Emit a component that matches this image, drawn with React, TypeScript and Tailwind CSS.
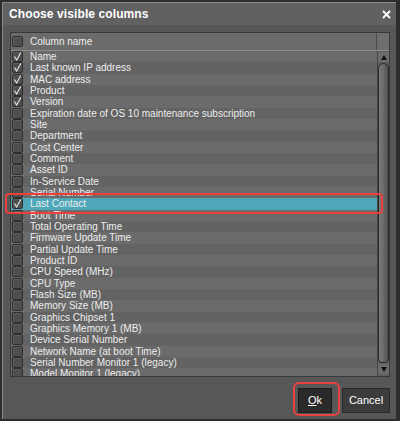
import React from 'react';

type Col = { name: string; checked?: boolean; selected?: boolean };

const columns: Col[] = [
  { name: 'Name', checked: true },
  { name: 'Last known IP address', checked: true },
  { name: 'MAC address', checked: true },
  { name: 'Product', checked: true },
  { name: 'Version', checked: true },
  { name: 'Expiration date of OS 10 maintenance subscription' },
  { name: 'Site' },
  { name: 'Department' },
  { name: 'Cost Center' },
  { name: 'Comment' },
  { name: 'Asset ID' },
  { name: 'In-Service Date' },
  { name: 'Serial Number' },
  { name: 'Last Contact', checked: true, selected: true },
  { name: 'Boot Time' },
  { name: 'Total Operating Time' },
  { name: 'Firmware Update Time' },
  { name: 'Partial Update Time' },
  { name: 'Product ID' },
  { name: 'CPU Speed (MHz)' },
  { name: 'CPU Type' },
  { name: 'Flash Size (MB)' },
  { name: 'Memory Size (MB)' },
  { name: 'Graphics Chipset 1' },
  { name: 'Graphics Memory 1 (MB)' },
  { name: 'Device Serial Number' },
  { name: 'Network Name (at boot Time)' },
  { name: 'Serial Number Monitor 1 (legacy)' },
  { name: 'Model Monitor 1 (legacy)' },
];

function CheckBox({ checked }: { checked?: boolean }) {
  return (
    <div className="w-[11px] h-[11px] shrink-0 rounded-[2px] border border-[#2e2e2e] bg-[#4e4e4e] shadow-[inset_1px_1px_0_#5e5e5e] flex items-center justify-center">
      {checked && (
        <svg width="9" height="9" viewBox="0 0 9 9">
          <path d="M1.5 4.5 L3.6 8 L7.8 0.5" fill="none" stroke="#e6e6e6" strokeWidth="1.1" />
        </svg>
      )}
    </div>
  );
}

export default function App() {
  return (
    <div className="relative w-[400px] h-[421px] bg-[#2d2d2d] pt-[2px] pl-[2px] pr-[4px] pb-[2px] font-['Liberation_Sans',Arial,sans-serif]">
      <div className="h-full flex flex-col border-l border-t border-[#8a8a8a] bg-[#575757]">
        <div className="h-[22px] shrink-0 bg-[#616161] flex items-center justify-between pl-[6px] pr-[5px]">
          <span className="text-[12px] font-bold text-white tracking-[0.1px]">Choose visible columns</span>
          <svg width="9" height="9" viewBox="0 0 9 9">
            <path d="M1 1 L8 8 M8 1 L1 8" stroke="#ffffff" strokeWidth="1.8" />
          </svg>
        </div>

        <div className="flex-1 flex flex-col pl-[7px] pr-[6px] pt-[7px]">
          <div className="h-[345px] shrink-0 flex flex-col border border-[#393939]">
            <div className="h-[18px] shrink-0 flex bg-[#6b6b6b] border-b border-[#8e8e8e]">
              <div className="flex-1 flex items-center pl-[1px]">
                <CheckBox />
                <span className="ml-[7px] text-[10px] text-[#ececec]">Column name</span>
              </div>
              <div className="w-[13px] border-l border-[#4a4a4a] bg-[#6e6e6e]" />
            </div>

            <div className="flex-1 flex overflow-hidden">
              <div className="flex-1 overflow-hidden">
                {columns.map((c, i) => (
                  <div
                    key={c.name}
                    className={
                      'h-[11.33px] flex items-center pl-[1px] ' +
                      (c.selected ? 'bg-[#4ea8ba]' : i % 2 === 0 ? 'bg-[#6b6b6b]' : 'bg-[#636363]')
                    }
                  >
                    <CheckBox checked={c.checked} />
                    <span className="ml-[7px] text-[10px] leading-[11px] whitespace-nowrap text-[#ededed]">{c.name}</span>
                  </div>
                ))}
              </div>
              <div className="w-[12px] shrink-0 flex flex-col bg-[#5e5e5e] border-l border-[#444]">
                <div className="h-[10px] mt-[1px] flex items-center justify-center bg-[#6c6c6c]">
                  <svg width="6" height="5" viewBox="0 0 6 5">
                    <path d="M3 0 L6 5 L0 5 Z" fill="#111" />
                  </svg>
                </div>
                <div className="flex-1 mt-[1px] mb-[1px] rounded-t-[6px] rounded-b-[5px] border border-[#2a2a2a] bg-gradient-to-r from-[#7a7a7a] via-[#6a6a6a] to-[#505050]" />
                <div className="h-[10px] mb-[2px] flex items-center justify-center bg-[#6c6c6c]">
                  <svg width="6" height="5" viewBox="0 0 6 5">
                    <path d="M0 0 L6 0 L3 5 Z" fill="#111" />
                  </svg>
                </div>
              </div>
            </div>
          </div>

          <div className="flex justify-end gap-[10px] pt-[11px]">
            <button className="w-[34px] h-[25px] bg-[#2a2a2a] border border-[#1c1c1c] text-[11px] text-white">
              <span className="underline">O</span>k
            </button>
            <button className="w-[48px] h-[25px] bg-[#3c3c3c] border border-[#2a2a2a] text-[11px] text-white">
              Cancel
            </button>
          </div>
        </div>
      </div>

      <div className="absolute left-[5px] top-[193px] w-[378px] h-[21px] border-2 border-[#e8413f] rounded-[4px]" />
      <div className="absolute left-[293px] top-[382px] w-[47px] h-[34px] border-2 border-[#e8413f] rounded-[6px]" />
    </div>
  );
}
